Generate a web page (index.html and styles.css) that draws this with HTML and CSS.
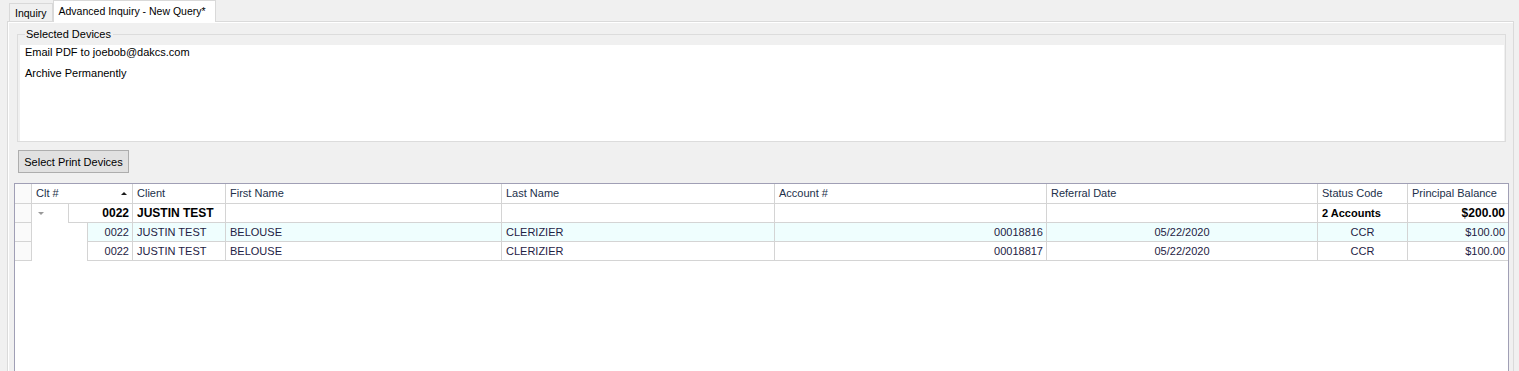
FILE: index.html
```html
<!DOCTYPE html>
<html lang="en">
<head>
  <meta charset="UTF-8" />
  <title>Advanced Inquiry - New Query*</title>
  <link rel="stylesheet" href="styles.css">
</head>
<body>
  <div class="window">
    <div class="tabs">
      <div class="tab">Inquiry</div>
      <div class="tab active">Advanced Inquiry - New Query*</div>
    </div>

    <div class="tab-page">
      <fieldset class="devices">
        <legend>Selected Devices</legend>
        <div class="device-list">
          <div class="device-item">Email PDF to joebob@dakcs.com</div>
          <div class="device-item">Archive Permanently</div>
        </div>
      </fieldset>

      <button class="select-btn" type="button">Select Print Devices</button>

      <div class="grid">
        <div class="row header">
          <div class="sel"></div>
          <div class="col c-clt">Clt #<span class="sort-up"></span></div>
          <div class="col c-client">Client</div>
          <div class="col c-first">First Name</div>
          <div class="col c-last">Last Name</div>
          <div class="col c-acct">Account #</div>
          <div class="col c-ref">Referral Date</div>
          <div class="col c-status">Status Code</div>
          <div class="col c-bal">Principal Balance</div>
        </div>

        <div class="row group">
          <div class="sel"></div>
          <div class="indent group-indent"><span class="expand"></span></div>
          <div class="col num clt-group">0022</div>
          <div class="col c-client">JUSTIN TEST</div>
          <div class="col c-first"></div>
          <div class="col c-last"></div>
          <div class="col c-acct"></div>
          <div class="col c-ref"></div>
          <div class="col c-status">2 Accounts</div>
          <div class="col c-bal num">$200.00</div>
        </div>

        <div class="row data alt">
          <div class="sel"></div>
          <div class="indent data-indent"></div>
          <div class="col num clt-data">0022</div>
          <div class="col c-client">JUSTIN TEST</div>
          <div class="col c-first">BELOUSE</div>
          <div class="col c-last">CLERIZIER</div>
          <div class="col c-acct num">00018816</div>
          <div class="col c-ref center">05/22/2020</div>
          <div class="col c-status center">CCR</div>
          <div class="col c-bal num">$100.00</div>
        </div>

        <div class="row data">
          <div class="sel"></div>
          <div class="indent data-indent"></div>
          <div class="col num clt-data">0022</div>
          <div class="col c-client">JUSTIN TEST</div>
          <div class="col c-first">BELOUSE</div>
          <div class="col c-last">CLERIZIER</div>
          <div class="col c-acct num">00018817</div>
          <div class="col c-ref center">05/22/2020</div>
          <div class="col c-status center">CCR</div>
          <div class="col c-bal num">$100.00</div>
        </div>
      </div>
    </div>
  </div>
</body>
</html>
```

FILE: styles.css
```css
html, body {
  margin: 0;
  height: 100%;
  overflow: hidden;
  background: #f0f0f0;
  font-family: 'Liberation Sans', Arial, sans-serif;
  font-size: 11px;
  color: #000;
}

.window {
  display: flex;
  flex-direction: column;
  height: 100%;
}

/* tab strip */

.tabs {
  display: flex;
  align-items: flex-end;
  height: 21px;
  flex: none;
  padding-left: 9px;
}

.tab {
  height: 17px;
  line-height: 18px;
  padding: 0 5px 0 5px;
  border: 1px solid #d9d9d9;
  border-bottom: none;
  background: #f0f0f0;
  color: #000;
  font-size: 10.5px;
}

.tab.active {
  position: relative;
  z-index: 1;
  height: 21px;
  line-height: 21px;
  margin-bottom: -1px;
  padding: 0 9px 0 5px;
  background: #fff;
  border-color: #d9d9d9;
}

.tab-page {
  flex: 1;
  min-height: 0;
  margin-left: 7px;
  width: 1495px;
  border: 1px solid #dadada;
  border-bottom: none;
  box-shadow: inset 1px 1px 0 #fff;
  padding: 6px 4px 0 6px;
  display: flex;
  flex-direction: column;
  align-items: flex-start;
}

/* selected devices group */

.devices {
  align-self: stretch;
  margin: 0 3px;
  padding: 4px 1px 0 2px;
  border: 1px solid #dcdcdc;
  min-width: 0;
}

.devices legend {
  margin-left: 5px;
  padding: 0 2px 0 1px;
  line-height: 13px;
  color: #000;
}

.device-list {
  height: 96px;
  background: #fff;
  padding-left: 5px;
}

.device-item {
  height: 21px;
  line-height: 14px;
}

.select-btn {
  margin: 8px 0 0 4px;
  width: 111px;
  height: 23px;
  padding: 0;
  background: #e1e1e1;
  border: 1px solid #adadad;
  font-family: inherit;
  font-size: 11px;
  color: #000;
}

/* grid */

.grid {
  flex: 1;
  margin-top: 10px;
  width: 1493px;
  background: #fff;
  border: 1px solid #a09fb5;
  border-bottom: none;
  color: #1e2244;
}

.row {
  display: flex;
  height: 19px;
  line-height: 18px;
}

.row.header {
  height: 20px;
  line-height: 19px;
  color: #22304a;
}

.sel, .col, .indent {
  flex: none;
  box-sizing: border-box;
}

.sel {
  width: 17px;
  background: #fafafa;
  border-right: 1px solid #d4d4d4;
  border-bottom: 1px solid #d4d4d4;
}

.col {
  padding: 0 3px 0 4px;
  border-right: 1px solid #d4d4d4;
  border-bottom: 1px solid #d4d4d4;
  white-space: nowrap;
  overflow: hidden;
}

.c-clt { width: 101px; position: relative; }
.c-client { width: 93px; }
.c-first { width: 276px; }
.c-last { width: 273px; }
.c-acct { width: 272px; }
.c-ref { width: 271px; }
.c-status { width: 90px; }
.c-bal { width: 100px; border-right: none; }

.num { text-align: right; }
.center { text-align: center; padding-left: 3px; }

.sort-up {
  position: absolute;
  right: 5px;
  top: 8px;
  width: 0;
  height: 0;
  border-left: 3px solid transparent;
  border-right: 3px solid transparent;
  border-bottom: 3px solid #1a1a1a;
}

.group-indent {
  width: 36px;
  display: flex;
  align-items: center;
  padding-left: 6px;
}

.expand {
  width: 0;
  height: 0;
  border-left: 3px solid transparent;
  border-right: 3px solid transparent;
  border-top: 3px solid #999;
}

.data-indent { width: 55px; }

.clt-group {
  width: 65px;
  border-left: 1px solid #d4d4d4;
}

.clt-data {
  width: 46px;
  border-left: 1px solid #d4d4d4;
}

.row.group {
  font-weight: bold;
  color: #000;
  font-size: 12px;
}

.row.group .c-status { font-size: 11px; }

.row.data.alt .col {
  background: #effefe;
}
```
